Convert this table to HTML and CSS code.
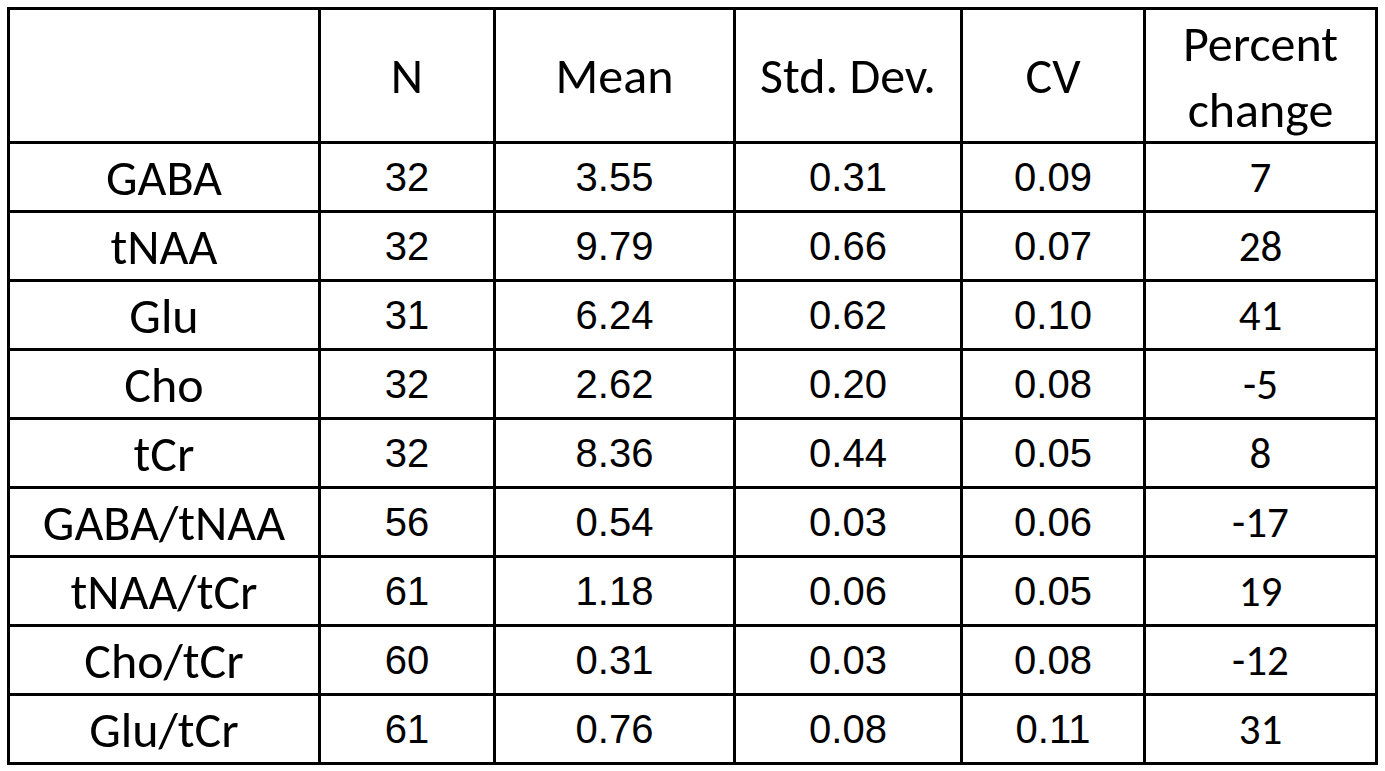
FILE: index.html
```html
<!DOCTYPE html>
<html lang="en">
<head>
<meta charset="utf-8">
<title>Metabolite statistics</title>
<link rel="stylesheet" href="styles.css">
</head>
<body>
<div class="wrap">
  <div class="grid" role="table">
    <div class="cell head label" role="columnheader"></div>
    <div class="cell head" role="columnheader">N</div>
    <div class="cell head" role="columnheader">Mean</div>
    <div class="cell head" role="columnheader">Std. Dev.</div>
    <div class="cell head" role="columnheader">CV</div>
    <div class="cell head two" role="columnheader">Percent<br>change</div>

    <div class="cell label">GABA</div><div class="cell num">32</div><div class="cell num">3.55</div><div class="cell num">0.31</div><div class="cell num">0.09</div><div class="cell pct">7</div>
    <div class="cell label">tNAA</div><div class="cell num">32</div><div class="cell num">9.79</div><div class="cell num">0.66</div><div class="cell num">0.07</div><div class="cell pct">28</div>
    <div class="cell label">Glu</div><div class="cell num">31</div><div class="cell num">6.24</div><div class="cell num">0.62</div><div class="cell num">0.10</div><div class="cell pct">41</div>
    <div class="cell label">Cho</div><div class="cell num">32</div><div class="cell num">2.62</div><div class="cell num">0.20</div><div class="cell num">0.08</div><div class="cell pct">-5</div>
    <div class="cell label">tCr</div><div class="cell num">32</div><div class="cell num">8.36</div><div class="cell num">0.44</div><div class="cell num">0.05</div><div class="cell pct">8</div>
    <div class="cell label">GABA/tNAA</div><div class="cell num">56</div><div class="cell num">0.54</div><div class="cell num">0.03</div><div class="cell num">0.06</div><div class="cell pct">-17</div>
    <div class="cell label">tNAA/tCr</div><div class="cell num">61</div><div class="cell num">1.18</div><div class="cell num">0.06</div><div class="cell num">0.05</div><div class="cell pct">19</div>
    <div class="cell label">Cho/tCr</div><div class="cell num">60</div><div class="cell num">0.31</div><div class="cell num">0.03</div><div class="cell num">0.08</div><div class="cell pct">-12</div>
    <div class="cell label">Glu/tCr</div><div class="cell num">61</div><div class="cell num">0.76</div><div class="cell num">0.08</div><div class="cell num">0.11</div><div class="cell pct">31</div>
  </div>
</div>
</body>
</html>
```

FILE: styles.css
```css
html, body {
  margin: 0;
  padding: 0;
  background: #ffffff;
}

.wrap {
  padding: 7px 0 0 7px;
}

.grid {
  display: grid;
  width: 1371px;
  box-sizing: border-box;
  grid-template-columns: 311px 175px 240px 227px 183px 232px;
  grid-template-rows: 134px repeat(9, 69px);
  border-left: 3px solid #000;
  border-top: 3px solid #000;
  color: #000;
}

.cell {
  box-sizing: border-box;
  border-right: 3px solid #000;
  border-bottom: 3px solid #000;
  display: flex;
  align-items: center;
  justify-content: center;
  text-align: center;
  white-space: nowrap;
}

.head,
.label {
  font-family: "Carlito", "Open Sans", "Lato", sans-serif;
  font-size: 50px;
}

.pct {
  font-family: "Carlito", "Open Sans", "Lato", sans-serif;
  font-size: 43px;
}

.num {
  font-family: "Liberation Sans", Arial, sans-serif;
  font-size: 40px;
}

.two {
  line-height: 66px;
  padding-top: 2px;
}
```
